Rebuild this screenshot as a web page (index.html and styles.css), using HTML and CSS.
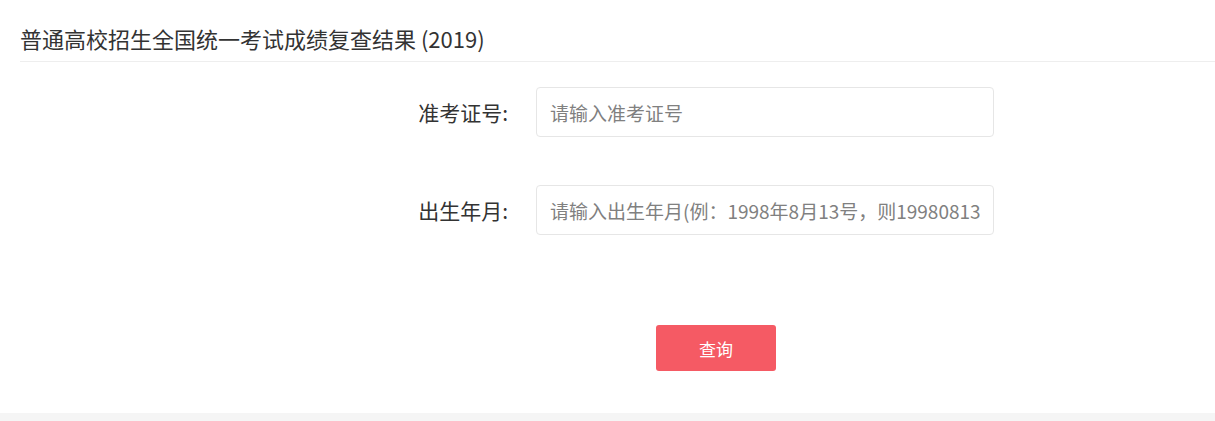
FILE: index.html
```html
<!DOCTYPE html>
<html lang="zh-CN">

<head>
  <meta charset="UTF-8">
  <meta name="viewport" content="width=device-width, initial-scale=1.0">
  <title>成绩复查结果</title>

  <link rel="stylesheet" href="styles.css">

</head>

<body>
  <div class="page">
    <h1 class="judul">普通高校招生全国统一考试成绩复查结果 (2019)</h1>

    <form class="form-cek" onsubmit="return false">
      <div class="baris">
        <label class="label" for="zkzh">准考证号:</label>
        <input class="isian" id="zkzh" type="text" placeholder="请输入准考证号">
      </div>
      <div class="baris">
        <label class="label" for="csny">出生年月:</label>
        <input class="isian" id="csny" type="text" placeholder="请输入出生年月(例：1998年8月13号，则19980813)">
      </div>
      <div class="baris-tombol">
        <button type="submit" class="tombol">查询</button>
      </div>
    </form>
  </div>
</body>

</html>
```

FILE: styles.css
```css
body {
  margin: 0;
  background-color: #f5f5f5;
  font-family: "Noto Sans CJK SC", "Noto Sans", sans-serif;
  color: #333;
}

.page {
  height: 413px;
  box-sizing: border-box;
  padding-left: 20px;
  background-color: #fff;
}

.judul {
  margin: 0;
  padding: 23px 0 8px;
  font-size: 22px;
  font-weight: normal;
  line-height: 30px;
  border-bottom: 1px solid #eee;
}

.form-cek {
  padding-top: 25px;
  margin-left: 388px;
}

.baris {
  display: flex;
  align-items: center;
  gap: 28px;
  margin-bottom: 48px;
}

.label {
  width: 100px;
  text-align: right;
  font-size: 21px;
  color: #333;
}

.isian {
  width: 458px;
  height: 50px;
  box-sizing: border-box;
  padding: 0 13px;
  border: 1px solid #e6e6e6;
  border-radius: 4px;
  font-family: inherit;
  font-size: 19px;
  color: #333;
  outline: none;
}

.isian::placeholder {
  color: #808080;
}

.baris-tombol {
  padding-top: 42px;
  padding-left: 248px;
}

.tombol {
  width: 120px;
  height: 46px;
  border: none;
  border-radius: 3px;
  background-color: #f55a64;
  color: #fff;
  font-family: inherit;
  font-size: 17px;
  cursor: pointer;
}
```
